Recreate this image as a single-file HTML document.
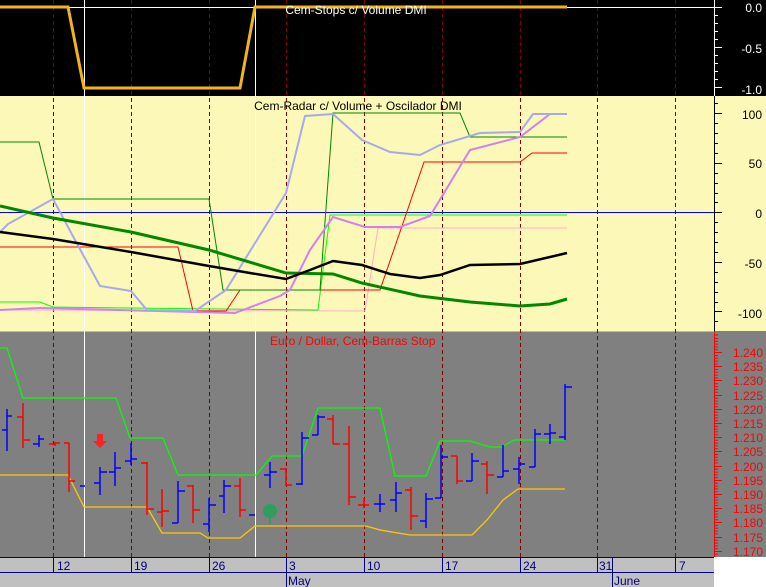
<!DOCTYPE html>
<html><head><meta charset="utf-8"><style>
html,body{margin:0;padding:0;background:#fff;}
svg{display:block;font-family:"Liberation Sans",sans-serif;}
</style></head><body>
<svg width="766" height="587" viewBox="0 0 766 587" xmlns="http://www.w3.org/2000/svg">
<rect x="0" y="0" width="766" height="96" fill="#000"/>
<rect x="0" y="96" width="766" height="235" fill="#fcf8b8"/>
<rect x="0" y="331" width="766" height="226" fill="#808080"/>
<rect x="0" y="557" width="714" height="30" fill="#c0c0c0"/>
<rect x="714" y="557" width="52" height="30" fill="#fff"/>
<line x1="0" y1="331" x2="714" y2="331" stroke="#fcf8b8" stroke-width="1"/>
<g stroke="#fff" stroke-width="1">
<line x1="84.5" y1="0" x2="84.5" y2="557"/>
<line x1="255.5" y1="0" x2="255.5" y2="557"/>
</g>
<g stroke="#800000" stroke-width="1" stroke-dasharray="4,3">
<line x1="53.5" y1="0" x2="53.5" y2="557"/>
<line x1="131.5" y1="0" x2="131.5" y2="557"/>
<line x1="209.5" y1="0" x2="209.5" y2="557"/>
<line x1="286.5" y1="0" x2="286.5" y2="557"/>
<line x1="364.5" y1="0" x2="364.5" y2="557"/>
<line x1="442.5" y1="0" x2="442.5" y2="557"/>
<line x1="520.5" y1="0" x2="520.5" y2="557"/>
<line x1="597.5" y1="0" x2="597.5" y2="557"/>
<line x1="675.5" y1="0" x2="675.5" y2="557"/>
</g>
<line x1="0" y1="7.5" x2="714" y2="7.5" stroke="#fff"/>
<polyline points="0,7 68,7 84,88 240,88 255,7 567,7" fill="none" stroke="#f4b418" stroke-width="3"/>
<text x="356" y="14" fill="#fff" font-size="12" text-anchor="middle">Cem-Stops c/ Volume DMI</text>
<line x1="714.5" y1="0" x2="714.5" y2="96" stroke="#fff"/>
<g stroke="#fff"><line x1="714" y1="7.5" x2="722" y2="7.5"/><line x1="714" y1="15.5" x2="718" y2="15.5"/><line x1="714" y1="23.5" x2="718" y2="23.5"/><line x1="714" y1="31.5" x2="718" y2="31.5"/><line x1="714" y1="39.5" x2="718" y2="39.5"/><line x1="714" y1="47.5" x2="722" y2="47.5"/><line x1="714" y1="55.5" x2="718" y2="55.5"/><line x1="714" y1="63.5" x2="718" y2="63.5"/><line x1="714" y1="71.5" x2="718" y2="71.5"/><line x1="714" y1="79.5" x2="718" y2="79.5"/><line x1="714" y1="87.5" x2="722" y2="87.5"/></g>
<g fill="#fff" font-size="12" text-anchor="end"><text x="762" y="12">0.0</text><text x="762" y="53">-0.5</text><text x="762" y="94">-1.0</text></g>
<line x1="0" y1="212.5" x2="714" y2="212.5" stroke="#0000ff"/>
<text x="358" y="110" fill="#000" font-size="12" text-anchor="middle">Cem-Radar c/ Volume + Oscilador DMI</text>
<polyline points="0,310 365,311 378,228 567,228" fill="none" stroke="#ffb0c8" stroke-width="1"/>
<polyline points="0,302 40,302 53,307 130,308 318,310 330,215 420,215 567,215" fill="none" stroke="#00ff00" stroke-width="1"/>
<polyline points="0,247 178,247 193,311 226,311 240,290 380,290 424,162 520,162 532,153 567,153" fill="none" stroke="#ff0000" stroke-width="1"/>
<polyline points="0,142 39,142 53,199 209,199 223,290 320,290 333,113 460,113 470,137 567,137" fill="none" stroke="#008800" stroke-width="1"/>
<polyline points="0,310 40,308 235,313 280,296 290,290 310,250 333,217 365,227 400,227 430,216 470,150 520,137 550,114" fill="none" stroke="#d080f0" stroke-width="2"/>
<polyline points="0,232 8,224 53,199 75,240 100,286 131,291 147,310 195,311 226,290 286,193 305,116 333,114 362,140 390,152 420,155 440,145 480,133 520,132 533,114 567,114" fill="none" stroke="#a8a8f0" stroke-width="2"/>
<polyline points="0,206 53,218 131,232 209,250 286,273 333,274 362,283 420,296 470,302 520,306 550,304 567,299" fill="none" stroke="#008800" stroke-width="3"/>
<polyline points="0,232 53,239 131,252 209,266 250,273 286,279 310,270 333,261 362,265 390,274 420,278 440,275 470,265 520,264 567,253" fill="none" stroke="#000" stroke-width="2.5"/>
<line x1="714.5" y1="96" x2="714.5" y2="331" stroke="#000"/>
<g stroke="#000"><line x1="714" y1="113.5" x2="722" y2="113.5"/><line x1="714" y1="163.5" x2="722" y2="163.5"/><line x1="714" y1="212.5" x2="722" y2="212.5"/><line x1="714" y1="262.5" x2="722" y2="262.5"/><line x1="714" y1="311.5" x2="722" y2="311.5"/>
<line x1="714" y1="103.5" x2="718" y2="103.5"/><line x1="714" y1="123.5" x2="718" y2="123.5"/><line x1="714" y1="133.5" x2="718" y2="133.5"/><line x1="714" y1="143.5" x2="718" y2="143.5"/><line x1="714" y1="153.5" x2="718" y2="153.5"/><line x1="714" y1="173.5" x2="718" y2="173.5"/><line x1="714" y1="183.5" x2="718" y2="183.5"/><line x1="714" y1="193.5" x2="718" y2="193.5"/><line x1="714" y1="202.5" x2="718" y2="202.5"/><line x1="714" y1="222.5" x2="718" y2="222.5"/><line x1="714" y1="232.5" x2="718" y2="232.5"/><line x1="714" y1="242.5" x2="718" y2="242.5"/><line x1="714" y1="252.5" x2="718" y2="252.5"/><line x1="714" y1="272.5" x2="718" y2="272.5"/><line x1="714" y1="282.5" x2="718" y2="282.5"/><line x1="714" y1="292.5" x2="718" y2="292.5"/><line x1="714" y1="302.5" x2="718" y2="302.5"/><line x1="714" y1="321.5" x2="718" y2="321.5"/></g>
<g fill="#000" font-size="12" text-anchor="end"><text x="762" y="119">100</text><text x="762" y="168">50</text><text x="762" y="218">0</text><text x="762" y="268">-50</text><text x="762" y="318">-100</text></g>
<text x="270" y="345" fill="#ff0000" font-size="12">Euro / Dollar, Cem-Barras Stop</text>
<polyline points="0,348 7,348 23,398 116,398 130,438 163,438 178,475 256,475 272,456 302,456 318,408 380,408 395,476 426,476 440,441 470,441 490,447 502,447 514,440 565,440" fill="none" stroke="#00ff00" stroke-width="1.3"/>
<polyline points="0,475 68,475 84,507 147,507 162,533 200,533 208,538 240,538 255,526 366,526 380,530 410,535 472,535 487,520 503,500 518,489 565,489" fill="none" stroke="#ffc800" stroke-width="1.3"/>
<g stroke-width="1.5" fill="none">
<path stroke="#0000ff" d="M7,409V451M2,430H7M7,416H12"/>
<path stroke="#ff0000" d="M23,403V448M17,417H23M23,440H30"/>
<path stroke="#0000ff" d="M39,435V447M33,444H39M39,439H44"/>
<path stroke="#ff0000" d="M55,442V446M49,444H55M55,443H60"/>
<path stroke="#ff0000" d="M69,443V492M64,443H69M69,481H75"/>
<path stroke="#0000ff" d="M80,486H85"/>
<path stroke="#0000ff" d="M100,467V495M94,483H100M100,472H107"/>
<path stroke="#0000ff" d="M115,452V486M109,472H115M115,468H121"/>
<path stroke="#0000ff" d="M131,443V465M125,461H131M131,459H137"/>
<path stroke="#ff0000" d="M147,462V515M141,463H147M147,509H154"/>
<path stroke="#ff0000" d="M162,489V527M157,512H162M162,511H169"/>
<path stroke="#0000ff" d="M178,481V523M172,523H178M178,491H185"/>
<path stroke="#ff0000" d="M193,485V523M187,486H193M193,510H200"/>
<path stroke="#0000ff" d="M209,498V532M203,524H209M209,505H216"/>
<path stroke="#0000ff" d="M224,480V513M219,496H224M224,486H231"/>
<path stroke="#ff0000" d="M240,478V517M234,486H240M240,510H246"/>
<path stroke="#0000ff" d="M249,515H255"/>
<path stroke="#0000ff" d="M270,462V488M264,475H270M270,472H277"/>
<path stroke="#ff0000" d="M286,468V486M280,469H286M286,485H292"/>
<path stroke="#0000ff" d="M302,432V485M296,484H302M302,438H309"/>
<path stroke="#0000ff" d="M318,415V435M312,435H318M318,417H325"/>
<path stroke="#ff0000" d="M333,415V444M327,419H333M333,444H340"/>
<path stroke="#ff0000" d="M349,426V505M343,444H349M349,497H356"/>
<path stroke="#ff0000" d="M364,498V508M358,505H364M364,505H369"/>
<path stroke="#0000ff" d="M380,494V512M374,504H380M380,504H385"/>
<path stroke="#0000ff" d="M396,482V512M390,500H396M396,493H402"/>
<path stroke="#ff0000" d="M411,487V530M405,490H411M411,516H418"/>
<path stroke="#0000ff" d="M426,493V528M420,521H426M426,499H433"/>
<path stroke="#0000ff" d="M441,445V498M435,498H441M441,457H448"/>
<path stroke="#ff0000" d="M457,456V484M451,456H457M457,481H463"/>
<path stroke="#0000ff" d="M472,453V481M466,481H472M472,461H479"/>
<path stroke="#ff0000" d="M487,461V494M481,464H487M487,475H494"/>
<path stroke="#0000ff" d="M503,445V477M497,477H503M503,471H509"/>
<path stroke="#0000ff" d="M519,457V484M513,469H519M519,464H525"/>
<path stroke="#0000ff" d="M535,429V467M529,467H535M535,434H541"/>
<path stroke="#0000ff" d="M550,424V444M544,434H550M550,433H556"/>
<path stroke="#0000ff" d="M565,384V440M559,437H565M565,387H572"/>
</g>
<polygon points="97,434 103,434 103,441 107,441 100,448 93,441 97,441" fill="#ff2020"/>
<circle cx="270" cy="511" r="7" fill="#2e9e5e"/>
<rect x="269" y="517" width="2" height="7" fill="#2e9e5e"/>
<line x1="714.5" y1="331" x2="714.5" y2="557" stroke="#ff0000"/>
<g stroke="#ff0000">
<line x1="714" y1="352.5" x2="722" y2="352.5"/><line x1="714" y1="366.5" x2="722" y2="366.5"/><line x1="714" y1="380.5" x2="722" y2="380.5"/><line x1="714" y1="395.5" x2="722" y2="395.5"/><line x1="714" y1="409.5" x2="722" y2="409.5"/><line x1="714" y1="423.5" x2="722" y2="423.5"/><line x1="714" y1="437.5" x2="722" y2="437.5"/><line x1="714" y1="451.5" x2="722" y2="451.5"/><line x1="714" y1="466.5" x2="722" y2="466.5"/><line x1="714" y1="480.5" x2="722" y2="480.5"/><line x1="714" y1="494.5" x2="722" y2="494.5"/><line x1="714" y1="508.5" x2="722" y2="508.5"/><line x1="714" y1="522.5" x2="722" y2="522.5"/><line x1="714" y1="537.5" x2="722" y2="537.5"/><line x1="714" y1="551.5" x2="722" y2="551.5"/>
</g>
<path d="M714,335h4M714,338.5h4M714,341.3h4M714,344.1h4M714,347h4M714,349.8h4M714,355.5h4M714,358.3h4M714,361.1h4M714,364h4M714,369.5h4M714,372.3h4M714,375.1h4M714,378h4M714,383.8h4M714,386.6h4M714,389.4h4M714,392.2h4M714,398.3h4M714,401.1h4M714,403.9h4M714,406.7h4M714,412.3h4M714,415.1h4M714,417.9h4M714,420.7h4M714,426.3h4M714,429.1h4M714,431.9h4M714,434.7h4M714,440.3h4M714,443.1h4M714,445.9h4M714,448.7h4M714,454.5h4M714,457.3h4M714,460.1h4M714,462.9h4M714,469.3h4M714,472.1h4M714,474.9h4M714,477.7h4M714,483.3h4M714,486.1h4M714,488.9h4M714,491.7h4M714,497.3h4M714,500.1h4M714,502.9h4M714,505.7h4M714,511.3h4M714,514.1h4M714,516.9h4M714,519.7h4M714,525.5h4M714,528.3h4M714,531.1h4M714,533.9h4M714,540.3h4M714,543.1h4M714,545.9h4M714,548.7h4M714,554.3h4" stroke="#ff0000" fill="none"/>
<g fill="#ff0000" font-size="12" text-anchor="end">
<text x="763" y="357">1.240</text><text x="763" y="371">1.235</text><text x="763" y="385">1.230</text><text x="763" y="400">1.225</text><text x="763" y="414">1.220</text><text x="763" y="428">1.215</text><text x="763" y="442">1.210</text><text x="763" y="456">1.205</text><text x="763" y="471">1.200</text><text x="763" y="485">1.195</text><text x="763" y="499">1.190</text><text x="763" y="513">1.185</text><text x="763" y="527">1.180</text><text x="763" y="542">1.175</text><text x="763" y="556">1.170</text>
</g>
<g stroke="#000080" stroke-width="1">
<line x1="0" y1="557.5" x2="714" y2="557.5"/>
<line x1="0" y1="572.5" x2="714" y2="572.5"/>
<line x1="53.5" y1="557" x2="53.5" y2="572"/><line x1="131.5" y1="557" x2="131.5" y2="572"/><line x1="209.5" y1="557" x2="209.5" y2="572"/><line x1="286.5" y1="557" x2="286.5" y2="587"/><line x1="364.5" y1="557" x2="364.5" y2="572"/><line x1="442.5" y1="557" x2="442.5" y2="572"/><line x1="520.5" y1="557" x2="520.5" y2="572"/><line x1="597.5" y1="557" x2="597.5" y2="572"/><line x1="612.5" y1="557" x2="612.5" y2="587"/><line x1="675.5" y1="557" x2="675.5" y2="572"/>
</g>
<g fill="#000080" font-size="12">
<text x="57" y="570">12</text><text x="134" y="570">19</text><text x="212" y="570">26</text><text x="289" y="570">3</text><text x="367" y="570">10</text><text x="445" y="570">17</text><text x="523" y="570">24</text><text x="599" y="570">31</text><text x="679" y="570">7</text>
<text x="288" y="585">May</text><text x="614" y="585">June</text>
</g>
</svg>
</body></html>
